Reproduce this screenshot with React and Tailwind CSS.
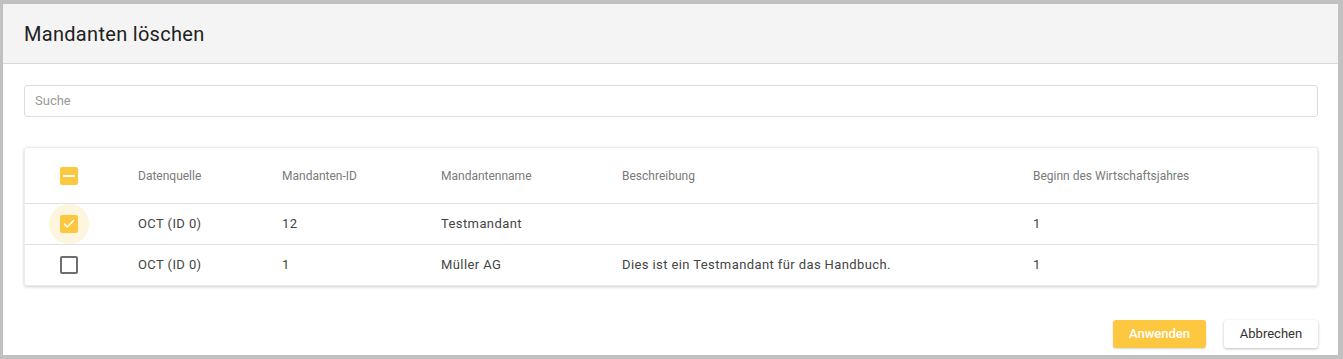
import { Check } from 'lucide-react'

const rows = [
    { checked: true, source: 'OCT (ID 0)', id: '12', name: 'Testmandant', desc: '', start: '1' },
    { checked: false, source: 'OCT (ID 0)', id: '1', name: 'Müller AG', desc: 'Dies ist ein Testmandant für das Handbuch.', start: '1' },
]

const cols = 'grid grid-cols-[113px_144px_159px_181px_411px_1fr] items-center'

function Box({ state }) {
    if (state === 'unchecked') {
        return <div className="w-[18px] h-[18px] rounded-[2px] border-2 border-[#6e6e6e]" />
    }
    return (
        <div className="w-[18px] h-[18px] rounded-[2px] bg-[#fdc83f] flex items-center justify-center">
            {state === 'checked'
                ? <Check className="w-[14px] h-[14px] text-white" strokeWidth={2.5} />
                : <div className="w-[12px] h-[2px] bg-white" />}
        </div>
    )
}

export default function App() {
    return (
        <div className="h-[359px] bg-white border-t-4 border-b-4 border-l-[3px] border-r-[5px] border-[#c1c1c1] flex flex-col font-['Roboto',sans-serif]">
            <header className="h-[60px] bg-[#f4f4f4] border-b border-[#d9d9d9] flex items-center px-[21px] flex-shrink-0">
                <h1 className="text-[20px] tracking-[0.3px] text-[#212121] leading-none">Mandanten löschen</h1>
            </header>

            <div className="flex-1 flex flex-col pl-[21px] pr-[20px] pt-[21px] pb-[7px]">
                <div className="h-[32px] border border-[#dddddd] rounded-[3px] flex items-center px-[10px]">
                    <span className="text-[13px] text-[#9a9a9a]">Suche</span>
                </div>

                <div className="mt-[30px] rounded-[3px] shadow-[0_1px_3px_rgba(0,0,0,0.2)] border border-[#ececec]">
                    <div className={`${cols} h-[56px] border-b border-[#e0e0e0] text-[12px] text-[#7a7a7a]`}>
                        <div className="pl-[35px]"><Box state="indeterminate" /></div>
                        <div>Datenquelle</div>
                        <div>Mandanten-ID</div>
                        <div>Mandantenname</div>
                        <div>Beschreibung</div>
                        <div>Beginn des Wirtschaftsjahres</div>
                    </div>
                    {rows.map((r, i) => (
                        <div
                            key={i}
                            className={`${cols} text-[13px] tracking-[0.4px] text-[#444444] ${i < rows.length - 1 ? 'h-[41px] border-b border-[#e0e0e0]' : 'h-[40px]'}`}
                        >
                            <div className="pl-[35px]">
                                <div className="relative w-[18px] h-[18px]">
                                    {r.checked && (
                                        <div className="absolute -left-[11px] -top-[11px] w-[40px] h-[40px] rounded-full bg-[#fdf5dd]" />
                                    )}
                                    <div className="relative">
                                        <Box state={r.checked ? 'checked' : 'unchecked'} />
                                    </div>
                                </div>
                            </div>
                            <div>{r.source}</div>
                            <div>{r.id}</div>
                            <div>{r.name}</div>
                            <div>{r.desc}</div>
                            <div>{r.start}</div>
                        </div>
                    ))}
                </div>

                <div className="mt-auto flex justify-end gap-[18px]">
                    <button className="w-[93px] h-[28px] rounded-[3px] bg-[#fdc83f] text-white text-[13px] font-medium shadow-[0_1px_2px_rgba(0,0,0,0.15)]">
                        Anwenden
                    </button>
                    <button className="w-[94px] h-[28px] rounded-[3px] bg-white text-[#333333] text-[13px] shadow-[0_1px_3px_rgba(0,0,0,0.25)]">
                        Abbrechen
                    </button>
                </div>
            </div>
        </div>
    )
}
